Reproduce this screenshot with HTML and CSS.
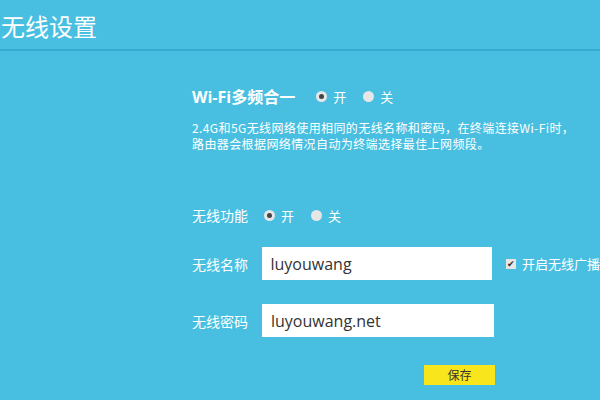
FILE: index.html
```html
<!DOCTYPE html>
<html lang="zh-CN">
<head>
    <meta charset="UTF-8">
    <meta name="viewport" content="width=device-width, initial-scale=1.0">
    <title>无线设置</title>
    <link rel="stylesheet" href="styles.css">
</head>
<body>

    <!-- Page title -->
    <header class="page-head">
        <h1>无线设置</h1>
    </header>

    <div class="panel">
        <!-- Dual band merge -->
        <div class="merge-row">
            <span class="merge-title">Wi-Fi多频合一</span>
            <label class="radio"><span class="dot checked"></span>开</label>
            <label class="radio"><span class="dot"></span>关</label>
        </div>
        <p class="merge-tip">2.4G和5G无线网络使用相同的无线名称和密码，在终端连接Wi-Fi时，<br>路由器会根据网络情况自动为终端选择最佳上网频段。</p>

        <!-- Wireless fields -->
        <div class="field switch-row">
            <span class="field-label">无线功能</span>
            <label class="radio"><span class="dot checked"></span>开</label>
            <label class="radio"><span class="dot"></span>关</label>
        </div>
        <div class="field">
            <span class="field-label">无线名称</span>
            <input class="text-input" type="text" value="luyouwang">
            <label class="check"><span class="box">&#10004;</span>开启无线广播</label>
        </div>
        <div class="field">
            <span class="field-label">无线密码</span>
            <input class="text-input" type="text" value="luyouwang.net">
        </div>
        <div class="actions">
            <button class="save-btn">保存</button>
        </div>
    </div>

</body>
</html>
```

FILE: styles.css
```css
body {
    margin: 0;
    background-color: #48bfe1;
    color: #fff;
    font-family: "Noto Sans CJK SC", "Noto Sans", sans-serif;
    overflow: hidden;
}
.page-head {
    height: 49px;
    border-bottom: 2px solid #38a9d0;
}
.page-head h1 {
    margin: 0;
    padding: 11px 0 0 1px;
    font-size: 24px;
    font-weight: normal;
    line-height: 30px;
}
.panel {
    padding: 34px 0 0 192px;
}
.merge-row {
    display: flex;
    align-items: center;
    height: 22px;
}
.merge-title {
    font-family: "Open Sans", "Noto Sans CJK SC", sans-serif;
    font-size: 16px;
    font-weight: bold;
    margin-right: 21px;
}
.radio {
    display: flex;
    align-items: center;
    font-size: 13px;
    margin-right: 17px;
}
.dot {
    width: 11px;
    height: 11px;
    border-radius: 50%;
    background-color: #e6e6e6;
    margin-right: 6px;
    position: relative;
}
.dot.checked::after {
    content: "";
    position: absolute;
    left: 3px;
    top: 3px;
    width: 5px;
    height: 5px;
    border-radius: 50%;
    background-color: #444;
}
.merge-tip {
    margin: 13px 0 0;
    font-size: 12px;
    line-height: 16px;
    letter-spacing: 0.4px;
}
.field {
    display: flex;
    align-items: center;
    height: 33px;
    margin-bottom: 24px;
}
.switch-row {
    margin-top: 52px;
    height: 22px;
    margin-bottom: 21px;
}
.field-label {
    width: 70px;
    font-size: 14px;
}
.switch-row .field-label {
    width: 72px;
}
.text-input {
    width: 232px;
    height: 33px;
    box-sizing: border-box;
    border: none;
    padding: 0 9px;
    font-family: "Open Sans", sans-serif;
    font-size: 16px;
    color: #333;
    background-color: #fff;
}
.check {
    display: flex;
    align-items: center;
    margin-left: 14px;
    font-size: 13px;
    white-space: nowrap;
}
.box {
    width: 10px;
    height: 10px;
    background-color: #e6e6e6;
    color: #333;
    font-size: 9px;
    line-height: 10px;
    text-align: center;
    margin-right: 6px;
}
.actions {
    padding-left: 232px;
    margin-top: 1px;
}
.save-btn {
    width: 71px;
    height: 20px;
    border: none;
    background-color: #f8e51c;
    color: #333;
    font-family: "Noto Sans CJK SC", sans-serif;
    font-size: 12px;
    padding: 0;
}
```
